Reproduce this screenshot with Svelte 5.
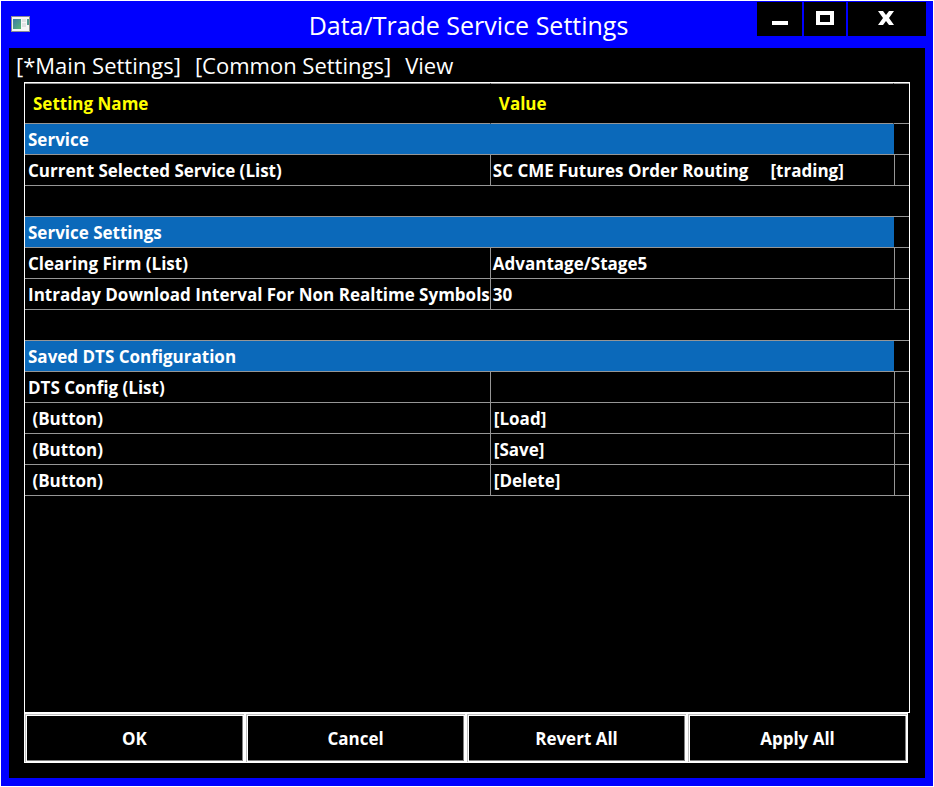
<script lang="ts">
    type Row = {
        kind: "section" | "setting" | "action" | "spacer";
        name?: string;
        value?: string;
    };

    const menu: string[] = ["[*Main Settings]", "[Common Settings]", "View"];
    const buttons: string[] = ["OK", "Cancel", "Revert All", "Apply All"];

    const rows: Row[] = [
        {kind: "section", name: "Service"},
        {kind: "setting", name: "Current Selected Service (List)", value: "SC CME Futures Order Routing     [trading]"},
        {kind: "spacer"},
        {kind: "section", name: "Service Settings"},
        {kind: "setting", name: "Clearing Firm (List)", value: "Advantage/Stage5"},
        {kind: "setting", name: "Intraday Download Interval For Non Realtime Symbols", value: "30"},
        {kind: "spacer"},
        {kind: "section", name: "Saved DTS Configuration"},
        {kind: "setting", name: "DTS Config (List)", value: ""},
        {kind: "action", name: " (Button)", value: "[Load]"},
        {kind: "action", name: " (Button)", value: "[Save]"},
        {kind: "action", name: " (Button)", value: "[Delete]"},
    ];
</script>

<div class="window">
    <header class="titlebar">
        <svg class="app-icon" width="19" height="16" viewBox="0 0 19 16" aria-hidden="true">
            <defs>
                <linearGradient id="pane" x1="0" y1="0" x2="1" y2="1">
                    <stop offset="0" stop-color="#3f78a8" />
                    <stop offset="1" stop-color="#58b878" />
                </linearGradient>
            </defs>
            <rect width="19" height="16" fill="#8c8c94" />
            <rect x="1" y="1" width="17" height="14" fill="#f6f6f6" />
            <rect x="2" y="3" width="8" height="10" fill="url(#pane)" />
            <rect x="11" y="3" width="4" height="3" fill="#e0e2e4" />
            <rect x="11" y="7" width="4" height="4" fill="#e0e2e4" />
            <rect x="16" y="3" width="2" height="6" fill="#4c9a90" />
        </svg>
        <h1>Data/Trade Service Settings</h1>
        <div class="controls">
            <button class="min" aria-label="Minimize">
                <svg width="18" height="14" viewBox="0 0 18 14"><path d="M1 10h16v4H1z" fill="#fff" /></svg>
            </button>
            <button class="max" aria-label="Maximize">
                <svg width="18" height="14" viewBox="0 0 18 14"><path d="M0 0h18v14H0zM4 4v7h10V4z" fill="#fff" fill-rule="evenodd" /></svg>
            </button>
            <button class="close" aria-label="Close">
                <svg width="16" height="14" viewBox="0 0 16 14"><path d="M0 0h5l3 4 3-4h5l-5 7 5 7h-5l-3-4-3 4H0l5-7z" fill="#fff" /></svg>
            </button>
        </div>
    </header>

    <main>
        <nav>
            {#each menu as item}
                <button>{item}</button>
            {/each}
        </nav>

        <div class="list">
            <table>
                <colgroup>
                    <col class="col-name" />
                    <col />
                    <col class="col-end" />
                </colgroup>
                <thead>
                    <tr>
                        <th>Setting Name</th>
                        <th>Value</th>
                        <th></th>
                    </tr>
                </thead>
                <tbody>
                    {#each rows as row}
                        {#if row.kind === "section"}
                            <tr class="section">
                                <td colspan="2">{row.name}</td>
                                <td></td>
                            </tr>
                        {:else if row.kind === "spacer"}
                            <tr><td colspan="3"></td></tr>
                        {:else}
                            <tr class="setting">
                                <td>{row.name}</td>
                                <td>
                                    {#if row.kind === "action"}
                                        <button>{row.value}</button>
                                    {:else}{row.value}{/if}
                                </td>
                                <td></td>
                            </tr>
                        {/if}
                    {/each}
                </tbody>
            </table>
        </div>

        <footer>
            {#each buttons as label}
                <button>{label}</button>
            {/each}
        </footer>
    </main>
</div>

<style>
    :global(body) {
        margin: 0;
        background: #000;
    }

    .window {
        box-sizing: border-box;
        min-height: 100vh;
        display: flex;
        flex-direction: column;
        border: 1px solid #fff;
        background: #00f;
        color: #fff;
        font-family: "Segoe UI", "Open Sans", "Noto Sans", sans-serif;
    }

    button {
        padding: 0;
        border: 0;
        background: none;
        color: inherit;
        font: inherit;
    }

    .titlebar {
        display: grid;
        grid-template-columns: 1fr auto 1fr;
        height: 47px;
        padding: 0 7px 0 10px;
    }

    .app-icon {
        margin-top: 15px;
    }

    h1 {
        margin: 0;
        font-size: 25px;
        font-weight: 400;
        line-height: 48px;
    }

    .controls {
        display: flex;
        justify-content: flex-end;
        align-items: flex-start;
        gap: 2px;
        padding-top: 1px;
    }

    .controls button {
        display: flex;
        justify-content: center;
        width: 42px;
        height: 34px;
        padding-top: 9px;
        background: #000;
    }

    .controls .min {
        width: 45px;
    }

    .controls .close {
        width: 78px;
        padding-right: 2px;
    }

    main {
        flex: 1;
        display: flex;
        flex-direction: column;
        margin: 0 8px 8px;
        padding: 0 15px 15px;
        background: #000;
    }

    nav {
        display: flex;
        gap: 14px;
        height: 34px;
        margin-left: -8px;
        font-size: 22px;
        line-height: 34px;
    }

    .list {
        flex: 1;
        border: 1px solid #fff;
    }

    table {
        width: 100%;
        table-layout: fixed;
        border-spacing: 0;
        font-size: 17px;
        font-weight: 700;
        line-height: 28px;
        white-space: pre;
    }

    .col-name {
        width: 52.7%;
    }

    .col-end {
        width: 15px;
    }

    th {
        height: 39px;
        padding: 0 8px;
        border-top: 1px solid #969696;
        border-right: 1px solid #000;
        border-bottom: 1px solid #969696;
        color: #ff0;
        text-align: left;
    }

    th:last-child {
        padding: 0;
        border-right: 0;
    }

    td {
        height: 28px;
        padding: 2px 0 0 3px;
        border-bottom: 1px solid #969696;
        overflow: hidden;
    }

    .section td:first-child {
        background: #0b69ba;
    }

    .setting td:first-child {
        border-right: 1px solid #969696;
    }

    .setting td:nth-child(2) {
        padding-left: 2px;
    }

    .setting td:last-child {
        border-left: 1px solid #969696;
    }

    td button {
        display: block;
        padding-left: 1px;
    }

    footer {
        display: grid;
        grid-template-columns: repeat(4, 1fr);
        margin-right: 2px;
    }

    footer button {
        height: 50px;
        border: 1px solid #fff;
        box-shadow: inset 1px 1px #c0c0c0, inset -1px -1px #fff, inset 2px 2px #fff, inset -2px -2px #808080;
        font-size: 17px;
        font-weight: 700;
    }
</style>
